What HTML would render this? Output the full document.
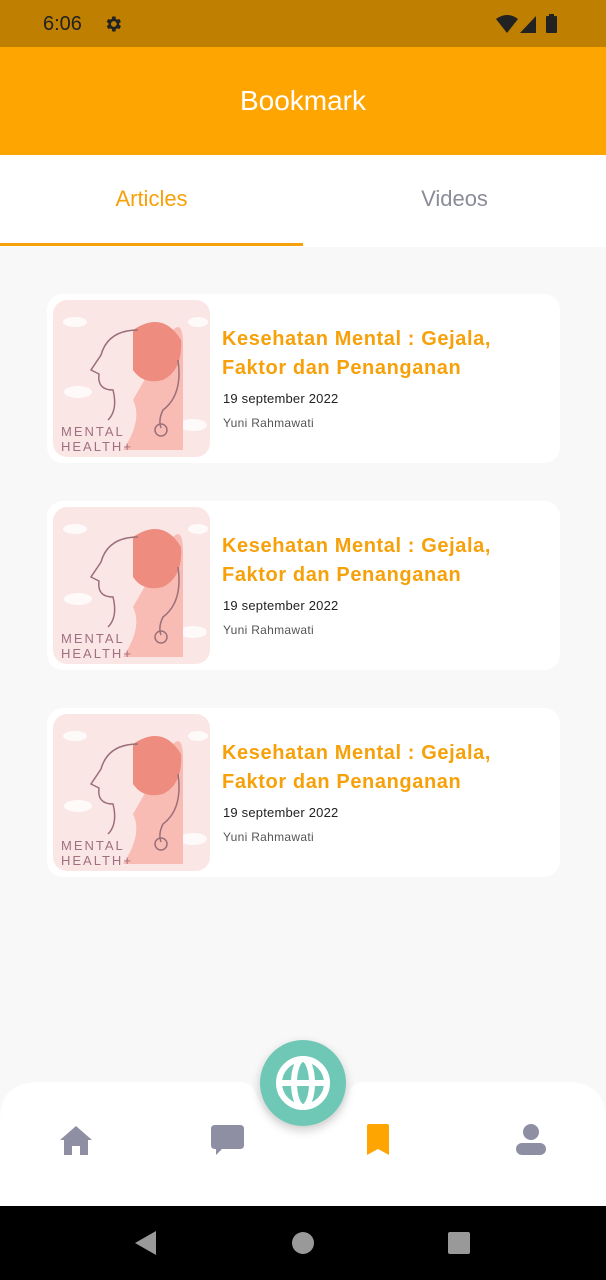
<!DOCTYPE html>
<html><head><meta charset="utf-8"><style>
*{margin:0;padding:0;box-sizing:border-box}
body{width:606px;height:1280px;background:#f8f8f8;font-family:"Liberation Sans",sans-serif;position:relative;overflow:hidden}
.sb{position:absolute;top:0;left:0;width:606px;height:47px;background:#bf7f00;color:#222}
.hd{position:absolute;top:47px;left:0;width:606px;height:108px;background:#ffa502;color:#fff;font-size:28px;text-align:center;line-height:108px}
.tabs{position:absolute;top:155px;left:0;width:606px;height:92px;background:#fff}
.tab{position:absolute;top:0;width:303px;height:92px;text-align:center;line-height:88px;font-size:22px}
.card{position:absolute;left:47px;width:513px;height:169px;background:#fff;border-radius:16px}
.img{position:absolute;left:6px;top:6px;width:157px;height:157px;border-radius:14px;background:#fbe6e6;overflow:hidden}
.t{position:absolute;left:175px;top:31px;color:#f7a10a;font-size:20px;line-height:29px;font-weight:bold;letter-spacing:0.6px}
.d{position:absolute;left:176px;top:97px;font-size:13px;color:#222;letter-spacing:0.2px}
.a{position:absolute;left:176px;top:122px;font-size:12px;color:#555;letter-spacing:0.3px}
.nav{position:absolute;top:1206px;left:0;width:606px;height:74px;background:#000}
</style></head><body>
<div class="sb">
<span style="position:absolute;left:43px;top:13px;font-size:20px">6:06</span>
<svg style="position:absolute;left:103px;top:14px" width="20" height="20" viewBox="0 0 24 24"><path fill="#222" d="M19.4 13a7.5 7.5 0 000-2l2.1-1.6-2-3.5-2.5 1a7 7 0 00-1.7-1L15 3h-4l-.4 2.9a7 7 0 00-1.7 1l-2.5-1-2 3.5L6.6 11a7.5 7.5 0 000 2l-2.1 1.6 2 3.5 2.5-1a7 7 0 001.7 1L11 21h4l.4-2.9a7 7 0 001.7-1l2.5 1 2-3.5zM13 15.5a3.5 3.5 0 110-7 3.5 3.5 0 010 7z"/></svg>
<svg style="position:absolute;left:496px;top:14px" width="72" height="20" viewBox="0 0 72 20"><path fill="#222" d="M0 5Q11-3 22 5L11 19z"/><path fill="#222" d="M24 19L40 2V19z"/><rect x="50" y="2" width="11" height="17" rx="1" fill="#222"/><rect x="53" y="0" width="5" height="3" fill="#222"/></svg>
</div>
<div class="hd">Bookmark</div>
<div class="tabs">
<div class="tab" style="left:0;color:#f7a10a">Articles</div>
<div class="tab" style="left:303px;color:#8a8d98">Videos</div>
<div style="position:absolute;left:0;top:88px;width:303px;height:3px;background:#f7a10a"></div>
</div>

<div class="card" style="top:294px">
<div class="img"><svg width="157" height="157" viewBox="0 0 157 157"><g fill="#fff" opacity=".8"><ellipse cx="22" cy="22" rx="12" ry="5"/><ellipse cx="25" cy="92" rx="14" ry="6"/><ellipse cx="140" cy="125" rx="14" ry="6"/><ellipse cx="145" cy="22" rx="10" ry="5"/></g><path d="M120 30Q130 20 130 45V150H70Q90 120 80 100Z" fill="#f8bcb4"/><path d="M80 30Q110 10 128 40Q130 70 110 80Q90 85 80 70Z" fill="#ef8c80"/><path d="M85 30Q55 30 48 55L38 70L46 74Q44 90 60 90Q65 110 55 120" fill="none" stroke="#9b6f78" stroke-width="1.5"/><path d="M125 60Q130 95 110 110Q105 120 108 128" fill="none" stroke="#9b6f78" stroke-width="1.5"/><circle cx="108" cy="130" r="6" fill="none" stroke="#9b6f78" stroke-width="1.5"/><text x="8" y="136" font-size="13" fill="#a07080" letter-spacing="2">MENTAL</text><text x="8" y="151" font-size="13" fill="#a07080" letter-spacing="2">HEALTH+</text></svg></div>
<div class="t">Kesehatan Mental : Gejala,<br>Faktor dan Penanganan</div>
<div class="d">19 september 2022</div><div class="a">Yuni Rahmawati</div>
</div>
<div class="card" style="top:501px">
<div class="img"><svg width="157" height="157" viewBox="0 0 157 157"><g fill="#fff" opacity=".8"><ellipse cx="22" cy="22" rx="12" ry="5"/><ellipse cx="25" cy="92" rx="14" ry="6"/><ellipse cx="140" cy="125" rx="14" ry="6"/><ellipse cx="145" cy="22" rx="10" ry="5"/></g><path d="M120 30Q130 20 130 45V150H70Q90 120 80 100Z" fill="#f8bcb4"/><path d="M80 30Q110 10 128 40Q130 70 110 80Q90 85 80 70Z" fill="#ef8c80"/><path d="M85 30Q55 30 48 55L38 70L46 74Q44 90 60 90Q65 110 55 120" fill="none" stroke="#9b6f78" stroke-width="1.5"/><path d="M125 60Q130 95 110 110Q105 120 108 128" fill="none" stroke="#9b6f78" stroke-width="1.5"/><circle cx="108" cy="130" r="6" fill="none" stroke="#9b6f78" stroke-width="1.5"/><text x="8" y="136" font-size="13" fill="#a07080" letter-spacing="2">MENTAL</text><text x="8" y="151" font-size="13" fill="#a07080" letter-spacing="2">HEALTH+</text></svg></div>
<div class="t">Kesehatan Mental : Gejala,<br>Faktor dan Penanganan</div>
<div class="d">19 september 2022</div><div class="a">Yuni Rahmawati</div>
</div>
<div class="card" style="top:708px">
<div class="img"><svg width="157" height="157" viewBox="0 0 157 157"><g fill="#fff" opacity=".8"><ellipse cx="22" cy="22" rx="12" ry="5"/><ellipse cx="25" cy="92" rx="14" ry="6"/><ellipse cx="140" cy="125" rx="14" ry="6"/><ellipse cx="145" cy="22" rx="10" ry="5"/></g><path d="M120 30Q130 20 130 45V150H70Q90 120 80 100Z" fill="#f8bcb4"/><path d="M80 30Q110 10 128 40Q130 70 110 80Q90 85 80 70Z" fill="#ef8c80"/><path d="M85 30Q55 30 48 55L38 70L46 74Q44 90 60 90Q65 110 55 120" fill="none" stroke="#9b6f78" stroke-width="1.5"/><path d="M125 60Q130 95 110 110Q105 120 108 128" fill="none" stroke="#9b6f78" stroke-width="1.5"/><circle cx="108" cy="130" r="6" fill="none" stroke="#9b6f78" stroke-width="1.5"/><text x="8" y="136" font-size="13" fill="#a07080" letter-spacing="2">MENTAL</text><text x="8" y="151" font-size="13" fill="#a07080" letter-spacing="2">HEALTH+</text></svg></div>
<div class="t">Kesehatan Mental : Gejala,<br>Faktor dan Penanganan</div>
<div class="d">19 september 2022</div><div class="a">Yuni Rahmawati</div>
</div>

<svg style="position:absolute;left:0;top:1080px" width="606" height="126" viewBox="0 0 606 126">
<path fill="#fff" d="M0 40Q0 2 40 2H240Q252 2 256 14Q270 48 303 48Q336 48 348 14Q352 2 364 2H566Q606 2 606 40V126H0Z"/>
</svg>
<div style="position:absolute;left:258px;top:1042px;width:90px;height:90px;border-radius:50%;background:#999;opacity:.35;filter:blur(4px)"></div>
<div style="position:absolute;left:260px;top:1040px;width:86px;height:86px;border-radius:50%;background:#6ec8b5"></div>
<svg style="position:absolute;left:270px;top:1050px" width="66" height="66" viewBox="0 0 66 66"><g fill="none" stroke="#fff" stroke-width="6"><circle cx="33" cy="33" r="24"/><ellipse cx="33" cy="33" rx="9" ry="24"/><line x1="9" y1="33" x2="57" y2="33"/></g></svg>
<svg style="position:absolute;left:58px;top:1124px" width="36" height="32" viewBox="0 0 36 32"><path fill="#8f8fa3" d="M18 2L2 16H6V31H14V22H22V31H30V16H34Z"/></svg>
<svg style="position:absolute;left:210px;top:1125px" width="36" height="32" viewBox="0 0 36 32"><path fill="#8f8fa3" d="M5 0H30Q34 0 34 4V20Q34 24 30 24H12L6 30V24H5Q1 24 1 20V4Q1 0 5 0Z"/></svg>
<svg style="position:absolute;left:366px;top:1124px" width="24" height="32" viewBox="0 0 24 32"><path fill="#ffa502" d="M3 0H21Q23 0 23 2V31L12 25L1 31V2Q1 0 3 0Z"/></svg>
<svg style="position:absolute;left:513px;top:1123px" width="36" height="34" viewBox="0 0 36 34"><circle cx="18" cy="9" r="8" fill="#8f8fa3"/><rect x="3" y="20" width="30" height="12" rx="6" fill="#8f8fa3"/></svg>

<div class="nav">
<svg style="position:absolute;left:134px;top:24px" width="24" height="26" viewBox="0 0 24 26"><path fill="#999" d="M22 1V25L1 13Z"/></svg>
<div style="position:absolute;left:292px;top:26px;width:22px;height:22px;border-radius:50%;background:#999"></div>
<div style="position:absolute;left:448px;top:26px;width:22px;height:22px;border-radius:2px;background:#999"></div>
</div>
</body></html>
